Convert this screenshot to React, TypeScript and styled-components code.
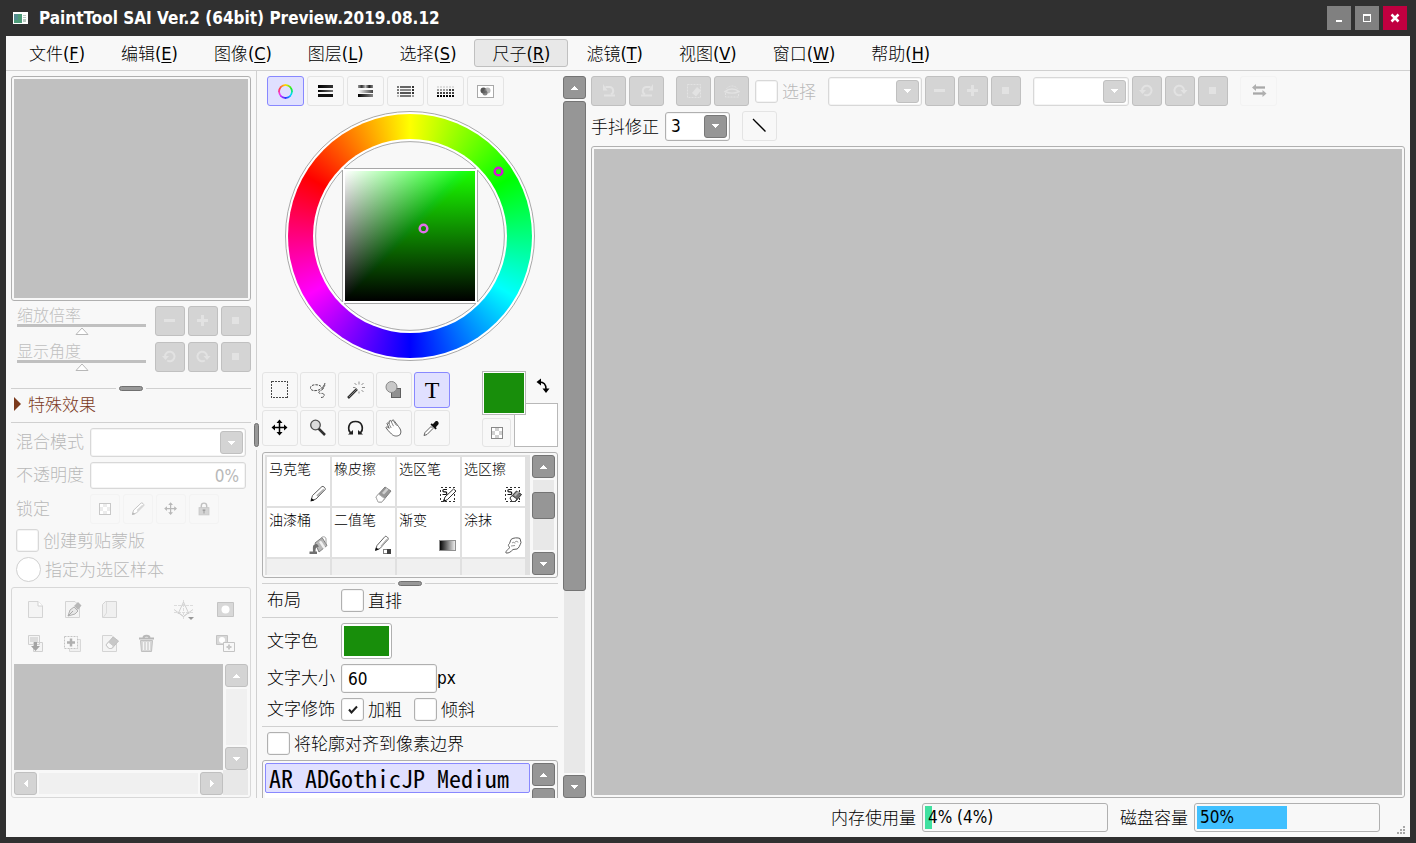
import React from "react";
import styled, { createGlobalStyle, css } from "styled-components";

const cjkFont = `"Noto Sans", "Noto Sans CJK SC", sans-serif`;
const latinFont = `"DejaVu Sans Condensed", "Noto Sans", sans-serif`;

const Global = createGlobalStyle`
  *, *::before, *::after { box-sizing: border-box; }
  body { margin: 0; background: #303030; }
  button, input, select { font: inherit; color: inherit; margin: 0; }
  button { padding: 0; }
  svg { display: block; }
`;

/* ---------- window frame ---------- */

const Frame = styled.div`
  display: flex;
  flex-direction: column;
  height: 100vh;
  padding: 0 6px 6px;
  background: #303030;
  color: #000;
  font: 300 17px/23px ${cjkFont};
`;

const TitleBar = styled.header`
  display: flex;
  align-items: center;
  flex: none;
  height: 36px;
  padding: 0 3px 0 7px;
`;

const Title = styled.h1`
  flex: 1;
  margin: 0 0 0 11px;
  color: #fff;
  font: 700 17px/24px ${latinFont};
`;

const WindowButton = styled.button<{ $close?: boolean }>`
  display: flex;
  align-items: center;
  justify-content: center;
  width: 24px;
  height: 24px;
  margin-left: 4px;
  border: 0;
  background: ${(p) => (p.$close ? "#c00040" : "#808080")};
`;

const Client = styled.main`
  display: flex;
  flex-direction: column;
  flex: 1;
  min-height: 0;
  background: #f8f8f8;
`;

const MenuBar = styled.nav`
  display: flex;
  align-items: center;
  flex: none;
  height: 35px;
  padding-left: 5px;
  border-bottom: 1px solid #d0d0d0;
`;

const Latin = styled.span`
  font-family: ${latinFont};
  font-weight: 400;
`;

const MenuItem = styled.button<{ $active?: boolean }>`
  height: 28px;
  padding: 0 17px;
  border: 1px solid ${(p) => (p.$active ? "#c0c0c0" : "transparent")};
  border-radius: 3px;
  background: ${(p) => (p.$active ? "#e8e8e8" : "transparent")};
  white-space: nowrap;
  ${Latin} {
    font-size: 18px;
  }
  u {
    text-underline-offset: 2px;
    text-decoration-thickness: 1px;
  }
`;

const Workspace = styled.div`
  display: grid;
  grid-template-columns: 240px 11px 296px 28px minmax(0, 1fr);
  flex: 1;
  min-height: 0;
  padding: 0 5px;
`;

const Column = styled.section`
  display: flex;
  flex-direction: column;
  min-width: 0;
  min-height: 0;
  padding-top: 5px;
  overflow: hidden;
`;

/* ---------- splitters ---------- */

const Splitter = styled.div<{ $vertical?: boolean }>`
  display: flex;
  flex: none;
  flex-direction: ${(p) => (p.$vertical ? "column" : "row")};
  align-items: center;
  gap: 3px;
  &::before,
  &::after {
    content: "";
    flex: 1;
    background: #d0d0d0;
    ${(p) => (p.$vertical ? "width: 1px;" : "height: 1px;")}
  }
`;

const Grip = styled.span<{ $vertical?: boolean }>`
  width: ${(p) => (p.$vertical ? 5 : 24)}px;
  height: ${(p) => (p.$vertical ? 24 : 5)}px;
  border: 1px solid #707070;
  border-radius: 3px;
  background: #989898;
`;

const Rule = styled.hr`
  flex: none;
  width: 100%;
  height: 1px;
  margin: 5px 0;
  border: 0;
  background: #d0d0d0;
`;

/* ---------- shared controls ---------- */

const Sunken = styled.div<{ $dim?: boolean }>`
  padding: 2px;
  border: 1px solid ${(p) => (p.$dim ? "#d8d8d8" : "#b0b0b0")};
  border-radius: 3px;
  background: #f8f8f8;
`;

const Blank = styled.div`
  width: 100%;
  height: 100%;
  background: #c0c0c0;
`;

const centered = css`
  display: flex;
  align-items: center;
  justify-content: center;
  flex: none;
`;

const SolidButton = styled.button<{ $wide?: boolean }>`
  ${centered}
  width: ${(p) => (p.$wide ? 35 : 30)}px;
  height: 30px;
  border: 1px solid #c0c0c0;
  border-radius: 3px;
  background: #d4d4d4;
  color: #e2e2e2;
`;

const FlatButton = styled.button<{ $w: number; $h: number; $active?: boolean; $ghost?: boolean }>`
  ${centered}
  width: ${(p) => p.$w}px;
  height: ${(p) => p.$h}px;
  border: 1px solid ${(p) => (p.$active ? "#8888ff" : p.$ghost ? "#f3f3f3" : "#e4e4e4")};
  border-radius: 3px;
  background: ${(p) => (p.$active ? "#e0e0ff" : "#f8f8f8")};
`;

const PlainButton = styled.button`
  ${centered}
  width: 37px;
  height: 34px;
  border: 0;
  background: transparent;
`;

const tick = `url("data:image/svg+xml,%3Csvg xmlns='http://www.w3.org/2000/svg' width='10' height='9'%3E%3Cpath d='M1 4.5L3.5 7.5L9 1.5' fill='none' stroke='%23202020' stroke-width='2'/%3E%3C/svg%3E")`;

const Check = styled.input.attrs({ type: "checkbox" })`
  appearance: none;
  flex: none;
  width: 23px;
  height: 23px;
  border: 1px solid #b0b0b0;
  border-radius: 3px;
  background: #fff center no-repeat;
  box-shadow: inset 0 0 0 1px #f4f4f4;
  &:checked {
    background-image: ${tick};
  }
  &:disabled {
    border-color: #d8d8d8;
  }
`;

const Radio = styled.input.attrs({ type: "radio" })`
  appearance: none;
  flex: none;
  width: 25px;
  height: 25px;
  border: 1px solid #d0d0d0;
  border-radius: 50%;
  background: #fff;
`;

const Option = styled.label<{ $dim?: boolean }>`
  display: flex;
  align-items: center;
  gap: 4px;
  white-space: nowrap;
  color: ${(p) => (p.$dim ? "#b8b8b8" : "#000")};
`;

const TextField = styled.input<{ $right?: boolean }>`
  min-width: 0;
  padding: 0 6px;
  border: 1px solid #b0b0b0;
  border-radius: 3px;
  background: #fff;
  box-shadow: inset 0 0 0 1px #f4f4f4;
  font-family: ${latinFont};
  font-weight: 400;
  text-align: ${(p) => (p.$right ? "right" : "left")};
  &:disabled {
    border-color: #d8d8d8;
    color: #b8b8b8;
  }
`;

const ComboBox = styled.span<{ $w: number; $dim?: boolean }>`
  display: flex;
  position: relative;
  flex: none;
  width: ${(p) => p.$w}px;
  height: 29px;
  border: 1px solid ${(p) => (p.$dim ? "#d8d8d8" : "#b0b0b0")};
  border-radius: 3px;
  background: #fff;
  box-shadow: inset 0 0 0 1px #f4f4f4;
`;

const ComboSelect = styled.select`
  appearance: none;
  width: 100%;
  padding: 0 28px 0 5px;
  border: 0;
  background: transparent;
  font-family: ${latinFont};
  font-weight: 400;
`;

const ComboArrow = styled.span<{ $dim?: boolean }>`
  ${centered}
  position: absolute;
  top: 2px;
  right: 2px;
  width: 23px;
  height: 23px;
  border: 1px solid ${(p) => (p.$dim ? "#c0c0c0" : "#787878")};
  border-radius: 3px;
  background: ${(p) => (p.$dim ? "#d4d4d4" : "#969696")};
  pointer-events: none;
`;

const Bar = styled.div<{ $row?: boolean }>`
  display: flex;
  flex-direction: ${(p) => (p.$row ? "row" : "column")};
  gap: 2px;
  flex: none;
  ${(p) => !p.$row && "width: 23px;"}
`;

const ScrollButton = styled.button<{ $dim?: boolean }>`
  ${centered}
  width: 23px;
  height: 23px;
  border: 1px solid ${(p) => (p.$dim ? "#c0c0c0" : "#747474")};
  border-radius: 3px;
  background: ${(p) => (p.$dim ? "#d4d4d4" : "#969696")};
`;

const Track = styled.div<{ $dim?: boolean; $row?: boolean }>`
  flex: 1;
  min-height: 0;
  margin: ${(p) => (p.$row ? "1px 0" : "0 1px")};
  background: ${(p) => (p.$dim ? "#f0f0f0" : "#e8e8e8")};
`;

const Thumb = styled.div<{ $h: number; $top?: number }>`
  height: ${(p) => p.$h}px;
  margin: ${(p) => p.$top ?? 0}px -1px 0;
  border: 1px solid #747474;
  border-radius: 3px;
  background: #969696;
`;

function Arrow({ dir, fill = "#fff" }: { dir: "up" | "down" | "left" | "right"; fill?: string }) {
  const shapes = {
    up: "M3 0h1v1h1v1h1v1h1v1H0V3h1V2h1V1h1z",
    down: "M0 0h7v1H6v1H5v1H4v1H3V3H2V2H1V1H0z",
    left: "M4 0v7H3V6H2V5H1V4H0V3h1V2h1V1h1V0z",
    right: "M0 0h1v1h1v1h1v1h1v1H3v1H2v1H1v1H0z",
  };
  const tall = dir === "left" || dir === "right";
  return (
    <svg width={tall ? 4 : 7} height={tall ? 7 : 4} fill={fill} shapeRendering="crispEdges" aria-hidden>
      <path d={shapes[dir]} />
    </svg>
  );
}

function Combo({ label, w, dim, value }: { label: string; w: number; dim?: boolean; value?: string }) {
  return (
    <ComboBox $w={w} $dim={dim}>
      <ComboSelect aria-label={label} disabled={dim}>
        <option>{value ?? ""}</option>
      </ComboSelect>
      <ComboArrow $dim={dim}>
        <Arrow dir="down" />
      </ComboArrow>
    </ComboBox>
  );
}

/* ---------- icons ---------- */

const Svg = (p: React.SVGProps<SVGSVGElement>) => <svg width={20} height={20} viewBox="0 0 20 20" fill="none" aria-hidden {...p} />;

const Minus = () => <Svg><path d="M4 8h11v3H4z" fill="currentColor" shapeRendering="crispEdges" /></Svg>;
const Plus = () => <Svg><path d="M4 8h4V4h3v4h4v3h-4v4H8v-4H4z" fill="currentColor" shapeRendering="crispEdges" /></Svg>;
const Dot = () => <Svg><path d="M6 6h7v7H6z" fill="currentColor" shapeRendering="crispEdges" /></Svg>;
const RotateCcw = () => (
  <Svg><path d="M5 9.500a4.800 4.800 0 1 1 2.200 4" stroke="currentColor" strokeWidth="2" /><path d="M2 9h7l-3.500 4z" fill="currentColor" /></Svg>
);
const RotateCw = () => (
  <Svg><path d="M14 9.500a4.800 4.800 0 1 0-2.200 4" stroke="currentColor" strokeWidth="2" /><path d="M10.500 9h7L14 13z" fill="currentColor" /></Svg>
);
const Undo = () => (
  <Svg><path d="M6.500 6h4.500a4 4 0 0 1 1 7.500" stroke="currentColor" strokeWidth="2" /><path d="M4 9.500V3l4.500 6.500zM5 13.500h11v2H5z" fill="currentColor" /></Svg>
);
const Redo = () => (
  <Svg><path d="M13.500 6H9a4 4 0 0 0-1 7.500" stroke="currentColor" strokeWidth="2" /><path d="M16 9.500V3l-4.500 6.500zM4 13.500h11v2H4z" fill="currentColor" /></Svg>
);
const Deselect = () => (
  <Svg><rect x="3.500" y="3.500" width="13" height="13" stroke="currentColor" strokeDasharray="2 1" /><path d="M8 12l5-6 4 3.500-5 6z" fill="currentColor" /></Svg>
);
const ShowSelection = () => (
  <Svg><path d="M4.500 8a6 5 0 0 1 11 0M3.500 12v4h13v-4" stroke="currentColor" strokeDasharray="2 1" /><path d="M3 10.500c4-3.500 10-3.500 14 0-4 2-10 2-14 0z" stroke="currentColor" strokeWidth="1.500" /></Svg>
);
const Flip = () => (
  <Svg>
    <path d="M5 5h11v3H5zM4 11h11v3H4z" fill="#c4c4c4" shapeRendering="crispEdges" />
    <path d="M5 6h11v1H5zM4 12h11v1H4z" fill="#a8a8a8" shapeRendering="crispEdges" />
    <path d="M3 6.500l4-3.500v7zM17.500 12.500l-4-3.500v7z" fill="#b0b0b0" />
  </Svg>
);

const Bars = () => (
  <Svg width="15" height="12" viewBox="0 0 15 12">
    <defs>
      <linearGradient id="dark"><stop stopColor="#000" /><stop offset="1" stopColor="#333" /></linearGradient>
      <linearGradient id="mid"><stop stopColor="#000" /><stop offset="1" stopColor="#777" /></linearGradient>
    </defs>
    <path d="M0 0h15v3H0z" fill="url(#dark)" /><path d="M0 5h15v2H0z" fill="url(#mid)" /><path d="M0 9h15v3H0z" fill="#111" />
  </Svg>
);
const HsvBars = () => (
  <Svg width="15" height="12" viewBox="0 0 15 12">
    <defs>
      <linearGradient id="hb1"><stop stopColor="#999" /><stop offset=".25" stopColor="#333" /><stop offset=".5" stopColor="#bbb" /><stop offset=".75" stopColor="#222" /><stop offset="1" stopColor="#888" /></linearGradient>
      <linearGradient id="hb2"><stop stopColor="#fff" /><stop offset="1" stopColor="#444" /></linearGradient>
      <linearGradient id="hb3"><stop stopColor="#000" /><stop offset="1" stopColor="#888" /></linearGradient>
    </defs>
    <path d="M0 0h15v3H0z" fill="url(#hb1)" /><path d="M0 5h15v3H0z" fill="url(#hb2)" /><path d="M0 9h15v3H0z" fill="url(#hb3)" />
  </Svg>
);
const MixBars = () => (
  <Svg width="17" height="11" viewBox="0 0 17 11" shapeRendering="crispEdges">
    {[0, 3, 6, 9].map((y, i) => (
      <React.Fragment key={y}>
        <path d={`M0 ${y}h2v2H0z`} fill={i === 3 ? "#bbb" : "#777"} />
        <path d={`M3 ${y}h11v2H3z`} fill={["#666", "#888", "#555", "#777"][i]} />
        <path d={`M15 ${y}h2v2h-2z`} fill={i === 3 ? "#999" : "#333"} />
      </React.Fragment>
    ))}
  </Svg>
);
const Swatches = () => (
  <Svg width="17" height="11" viewBox="0 0 17 11" shapeRendering="crispEdges">
    {[0, 1, 2, 3].map((r) =>
      [0, 1, 2, 3, 4, 5].map((c) => (
        <rect key={`${r}-${c}`} x={c * 3} y={r * 3} width="2" height="2" fill={["#ddd", c > 3 ? "#444" : "#999", "#444", "#000"][r]} />
      )),
    )}
  </Svg>
);
const Scratchpad = () => (
  <Svg width="17" height="13" viewBox="0 0 17 13">
    <rect x=".5" y=".5" width="16" height="12" fill="#fff" stroke="#a8a8a8" />
    <circle cx="6.500" cy="5.500" r="3" fill="#555" /><circle cx="10.500" cy="5.500" r="3" fill="#999" opacity=".7" /><circle cx="8" cy="8" r="2.500" fill="#666" opacity=".8" />
  </Svg>
);

const HueDot = styled.span`
  width: 15px;
  height: 15px;
  border-radius: 50%;
  background: conic-gradient(from -60deg, #f44, #fd0, #2e2, #0df, #33f, #e3f, #f44);
  mask: radial-gradient(circle, transparent 5px, #000 6px);
`;

const Marquee = () => <Svg><rect x="1.500" y="1.500" width="16" height="16" stroke="#484848" strokeDasharray="2 1" shapeRendering="crispEdges" /></Svg>;
const Lasso = () => (
  <Svg>
    <path d="M13 6.500C11 4 3 4 2.500 7.500S8 11.500 12 9.500l5-5" stroke="#484848" strokeDasharray="2.500 1" />
    <path d="M17 3l-2 6c-3 2-5 3-4 4s4-.5 5 1.500-1 3-3 3" stroke="#505050" strokeDasharray="4 1" />
    <path d="M14 9l3-4.500" stroke="#808080" strokeWidth="1.500" />
  </Svg>
);
const Wand = () => (
  <Svg>
    <path d="M2 18L11 9" stroke="#303030" strokeWidth="2.500" /><path d="M3 17L11 9" stroke="#909090" strokeWidth=".8" />
    <path d="M13 4.500v-3M13 13.500v-2M16 7.500h3M9.500 7.500H7M15.500 5l2-2M10.500 5l-2-2M15.500 10l2 2" stroke="#909090" />
  </Svg>
);
const Shapes = () => (
  <Svg><rect x="7.500" y="8.500" width="9" height="9" fill="#909090" stroke="#606060" /><circle cx="7.500" cy="7" r="5.500" fill="#c8c8c8" stroke="#888" /></Svg>
);
const TextGlyph = styled.span`
  color: #000;
  font: 400 24px/34px "Liberation Serif", serif;
`;
const Move = ({ c = "#000", s = 20 }: { c?: string; s?: number }) => (
  <Svg width={s} height={s}>
    <path d="M9.500 3v13M3 9.500h13" stroke={c} strokeWidth="1.500" />
    <path d="M9.500 1.500L12.500 5h-6zM9.500 17.500l3-3.500h-6zM1.500 9.500L5 6.500v6zM17.500 9.500L14 6.500v6z" fill={c} />
  </Svg>
);
const Magnifier = () => (
  <Svg><path d="M10.500 10.500l6.500 6.500" stroke="#303030" strokeWidth="2.500" /><circle cx="7.500" cy="7" r="4.800" fill="#dcdcdc" stroke="#505050" strokeWidth="1.300" /></Svg>
);
const Omega = () => (
  <Svg>
    <path d="M5.500 15.500C.8 12 2 3.500 9.500 3.500s8.700 8.500 4 12" stroke="#202020" strokeWidth="1.700" />
    <path d="M2 16.500h5v-4.500zM17 16.500h-5v-4.500z" fill="#202020" />
  </Svg>
);
const Hand = () => (
  <Svg>
    <path d="M7.500 16C5 13.500 3 11.500 2 9.500c.3-1 1.500-1 3.200.8L3 5.500c.5-1.200 1.700-.8 2 .3L5.300 3c.8-1 2-.5 2.200.7L8.500 2C9.500 1.500 10.500 3 11 4l3.500 4.500c2.800 3.500 3 6 1.200 8.500-2.500 1.500-5.800 1.500-8.200-1z" fill="#fff" stroke="#606060" />
    <path d="M4.500 5l2.700 5M7 3.200l2.500 5M9.500 3l3 4.500" stroke="#888" />
  </Svg>
);
const Dropper = () => (
  <Svg>
    <path d="M2 17.500l1-3 6-6 2 2-6 6z" fill="#fff" stroke="#606060" />
    <path d="M8.500 6.500l5 5 1.300-1.300-1-1 2.500-2.700c1.500-2-1.300-4.500-3-3l-2.500 2.700-1-1z" fill="#101010" />
  </Svg>
);
const Checker = ({ dim }: { dim?: boolean }) => (
  <Svg width="12" height="12" viewBox="0 0 12 12" shapeRendering="crispEdges">
    <rect x="0" y="0" width="12" height="12" fill={dim ? "#c8c8c8" : "#888"} />
    <rect x="1" y="1" width="10" height="10" fill="#fff" />
    <path d="M1 4h3v4H1zM4 1h4v3H4zM8 4h3v4H8zM4 8h4v3H4z" fill={dim ? "#ececec" : "#d0d0d0"} />
  </Svg>
);
const Swap = () => (
  <Svg><path d="M7.500 5c4 0 6.500 2.500 6.500 7" stroke="#000" strokeWidth="1.500" /><path d="M4.500 5L9 1.500v7zM10.500 11.500h7L14 16z" fill="#000" /></Svg>
);
const Pencil = ({ dim }: { dim?: boolean }) => (
  <Svg width={dim ? 16 : 20} height={dim ? 16 : 20}>
    <path d="M3 16.500l1.500-5L14 2.500c1-.8 4 1.500 3.200 3.200L8 15z" fill="#fff" stroke={dim ? "#b8b8b8" : "#606060"} />
    <path d="M9 12l7-6.500" stroke={dim ? "#d8d8d8" : "#b0b0b0"} strokeWidth="2" /><path d="M2.500 17.500l1-3.500 3 2.500z" fill={dim ? "#b8b8b8" : "#101010"} />
  </Svg>
);
const Eraser = () => (
  <Svg>
    <path d="M3 13L12 3l6 4-9 11H5.500z" fill="#989898" stroke="#808080" /><path d="M3 13l2.500-3 6 4.500-2.500 3.500H5z" fill="#fff" stroke="#b0b0b0" />
    <path d="M9 9l4.500-5 2 1.500-4.500 5z" fill="#d0d0d0" />
  </Svg>
);
const DashBox = () => (
  <>
    <rect x="2.500" y="3.500" width="14" height="14" stroke="#303030" strokeDasharray="2 2" shapeRendering="crispEdges" />
    <path d="M9 5.500H6c-1.500 0-1.500 2.300 0 2.300h1.500c1.700 0 1.700 2.700 0 2.700H4.500" stroke="#101010" strokeWidth="1.200" />
  </>
);
const SelPen = () => (
  <Svg><DashBox /><path d="M5.500 17.500l1.500-4.500L15.500 5l2.500 2-8.500 8.500z" fill="#fff" stroke="#303030" /><path d="M5 18l1-3 2 1.500z" fill="#101010" /></Svg>
);
const SelEraser = () => (
  <Svg><DashBox /><path d="M7 14l6.500-7 5 3.500-6 7H9.500z" fill="#707070" stroke="#303030" /><path d="M11 11l4-4 1.500 1-4 4.500z" fill="#b0b0b0" /><path d="M7 14l2-2.500 5 3.500-2 2.500H9z" fill="#fff" stroke="#404040" /></Svg>
);
const Bucket = () => (
  <Svg>
    <path d="M7 8l7-5.500 5 8-8 6.500z" fill="#b8b8b8" stroke="#808080" /><path d="M13 7V4c0-3 5-3 5 0v5" stroke="#a0a0a0" />
    <path d="M11 7l2-1.500 4.500 7-2 1.500z" fill="#f0f0f0" /><path d="M9 9C4 9 5 12 5 16.500H1.500V19H9v-2.500H7.500c0-4 1-4.500 3.500-5z" fill="#707070" />
  </Svg>
);
const BinaryPen = () => (
  <Svg><path d="M2.500 15l1.500-4.500L12 1.500c1-.8 4 1.200 3 3L7 13.500z" fill="#fff" stroke="#606060" /><path d="M8 11.500l6-7" stroke="#b0b0b0" strokeWidth="1.500" /><path d="M2 16l1-3.500 3 2z" fill="#101010" /><rect x="10.500" y="14.500" width="7" height="4" fill="#fff" stroke="#808080" /><path d="M14 14h4v5h-4z" fill="#404040" /></Svg>
);
const Gradient = () => (
  <Svg>
    <defs><linearGradient id="fade"><stop stopColor="#000" /><stop offset="1" stopColor="#f4f4f4" /></linearGradient></defs>
    <rect x="1.500" y="5.500" width="16" height="10" fill="url(#fade)" stroke="#909090" />
  </Svg>
);
const Smudge = () => (
  <Svg><path d="M3 18c-1-1 2-4 4-5.500-2-1-2-3-.5-4L8 4.500c2-2 7-2 9-1l1 4c-1 3-2.500 6-4 6.500l-4 .5c-2 2-4 4-7 3.500z" fill="#fff" stroke="#606060" /><path d="M9 8c1-1 3-1 3 .5M12 7c1-1 3-1 3 .5M8 11l4-.5" stroke="#989898" /></Svg>
);
const Lock = () => (
  <Svg width="18" height="18"><path d="M7 9V6.500a3 3 0 0 1 6 0V9" stroke="#c0c0c0" strokeWidth="1.600" /><rect x="4.500" y="8.500" width="11" height="8" fill="#d4d4d4" stroke="#c8c8c8" /><path d="M8.500 10.500h3V12h-1v3h-1v-3h-1z" fill="#989898" /></Svg>
);

const Page = ({ x = 0 }: { x?: number }) => (
  <path d={`M${2.5 + x} 1.500h9.500l4.500 4.500v11.500H${2.5 + x}z`} fill="#f4f4f4" stroke="#d4d4d4" />
);
const NewLayer = () => <Svg><Page /><path d="M12 1.500v4.500h4.500" fill="#fff" stroke="#d0d0d0" /></Svg>;
const NewLinework = () => <Svg><Page /><path d="M5 16l2-6 4-3 4 4-3 3z" fill="#e8e8e8" stroke="#b0b0b0" /><path d="M5 16l5-5" stroke="#a8a8a8" /><path d="M11 6l4-4 3.500 3.500L15 10z" fill="#b8b8b8" /></Svg>;
const NewFolder = () => <Svg><path d="M2.500 17.500v-13l3-3h11v16z" fill="#f0f0f0" stroke="#d4d4d4" /><path d="M6.500 2v11l-3 4" stroke="#dcdcdc" /></Svg>;
const Perspective = () => (
  <Svg width="22" height="22" viewBox="0 0 22 22">
    <path d="M10.500 1v19M1 6.500h19M1 13.500h19" stroke="#dcdcdc" strokeDasharray="3 1" />
    <path d="M10.500 3L16 15M10.500 3L5 15M1 10.500l9.500 7 9.500-7M5 13.500l5.500 4 5.500-4" stroke="#d0d0d0" />
    <path d="M15 18h6l-3 3z" fill="#989898" />
  </Svg>
);
const Mask = () => <Svg><path d="M1.500 2.500h16v14h-16z" fill="#d8d8d8" stroke="#c4c4c4" /><circle cx="9.500" cy="9.500" r="4" fill="#fff" /></Svg>;
const MergeDown = () => <Svg><path d="M7.500 8.500h9v9h-9zM2.500 1.500h11v9h-11z" fill="#f4f4f4" stroke="#d0d0d0" /><path d="M4 3h8v5H4z" fill="#dcdcdc" /><path d="M8 8h3v4h3l-4.500 5L5 12h3z" fill="#a4a4a4" /></Svg>;
const CopyLayer = () => <Svg><path d="M6.500 5.500h11v12h-11z" fill="#f0f0f0" stroke="#d8d8d8" /><rect x="1.500" y="2.500" width="13" height="12" fill="#f8f8f8" stroke="#c4c4c4" strokeDasharray="2 1" /><path d="M8 4.500v8M4 8.500h8" stroke="#b0b0b0" strokeWidth="2.500" /></Svg>;
const ClearLayer = () => <Svg><Page /><path d="M6 11l7-8 5.500 4-6.500 7.500H9z" fill="#c8c8c8" stroke="#c0c0c0" /><path d="M6 11l2.500-3 5 4-2 2.500H9z" fill="#f8f8f8" stroke="#c8c8c8" /></Svg>;
const Trash = () => <Svg><path d="M2 4.500h15M6.500 4c0-3 6-3 6 0" stroke="#b8b8b8" strokeWidth="2" /><path d="M3.500 6.500h12l-1 11h-10z" fill="#d8d8d8" stroke="#c0c0c0" /><path d="M6.500 8v8M9.500 8v8M12.500 8v8" stroke="#f4f4f4" /></Svg>;
const ApplyMask = () => <Svg><path d="M.5 1.500h11v9H.5z" fill="#d8d8d8" stroke="#c4c4c4" /><circle cx="6" cy="6" r="3" fill="#fff" /><path d="M7.500 8.500h11v9h-11z" fill="#f8f8f8" stroke="#c4c4c4" /><path d="M13 10.500v5M10.500 13h5" stroke="#c8c8c8" strokeWidth="2" /></Svg>;

/* ---------- left column ---------- */

const Navigator = styled(Sunken)`
  flex: none;
  height: 225px;
`;

const SliderRow = styled.div`
  display: flex;
  gap: 3px;
  flex: none;
  height: 30px;
  margin-top: 5px;
  & + & {
    margin-top: 6px;
  }
`;

const SliderField = styled.label`
  display: flex;
  flex-direction: column;
  flex: 1;
  padding: 0 6px;
  color: #c0c0c0;
  font-size: 16px;
  line-height: 18px;
`;

const triangle = `url("data:image/svg+xml,%3Csvg xmlns='http://www.w3.org/2000/svg' width='14' height='8'%3E%3Cpath d='M1 7.500L7 1L13 7.500z' fill='%23fff' stroke='%23b8b8b8'/%3E%3C/svg%3E")`;

const Slider = styled.input.attrs({ type: "range" })`
  appearance: none;
  width: 100%;
  height: 12px;
  background: linear-gradient(#c0c0c0, #c0c0c0) 0 0 / 100% 3px no-repeat;
  &::-webkit-slider-runnable-track {
    height: 12px;
  }
  &::-webkit-slider-thumb {
    appearance: none;
    width: 14px;
    height: 8px;
    margin-top: 3px;
    background: ${triangle};
  }
`;

const NavSplitter = styled(Splitter)`
  margin-top: 14px;
`;

const EffectsToggle = styled.button`
  display: flex;
  align-items: center;
  gap: 7px;
  flex: none;
  height: 26px;
  padding: 0 3px;
  border: 0;
  background: transparent;
  color: #7b3a1c;
`;

const Rows = styled.div`
  display: flex;
  flex-direction: column;
  gap: 5px;
  flex: none;
`;

const Field = styled.div<{ $dim?: boolean }>`
  display: flex;
  align-items: center;
  padding-left: 5px;
  color: ${(p) => (p.$dim ? "#b8b8b8" : "#000")};
`;

const FieldLabel = styled.label`
  flex: none;
  width: 74px;
  padding-bottom: 2px;
  line-height: 21px;
  white-space: nowrap;
`;

const OpacityField = styled(TextField)`
  width: 156px;
  height: 27px;
`;

const LockButtons = styled.div`
  display: flex;
  gap: 3px;
`;

const Layers = styled(Sunken)`
  display: flex;
  flex-direction: column;
  flex: 1;
  min-height: 0;
  margin-top: 5px;
`;

const LayerTools = styled.div`
  display: grid;
  grid-template-columns: repeat(4, 37px) 42px 1fr;
  flex: none;
  padding: 3px;
`;

const LayerArea = styled.div`
  display: grid;
  grid-template: 1fr 25px / 1fr 25px;
  flex: 1;
  min-height: 0;
  & > :nth-child(2) {
    margin-left: 2px;
  }
  & > :nth-child(3) {
    margin-top: 2px;
  }
`;

const Corner = styled.div`
  background: #e8e8e8;
`;

function SliderControl({ label, children }: { label: string; children: React.ReactNode }) {
  return (
    <SliderRow>
      <SliderField>
        {label}
        <Slider defaultValue={50} disabled />
      </SliderField>
      {children}
    </SliderRow>
  );
}

function LeftPanel() {
  return (
    <Column>
      <Navigator><Blank /></Navigator>
      <SliderControl label="缩放倍率">
        <SolidButton disabled aria-label="缩小"><Minus /></SolidButton>
        <SolidButton disabled aria-label="放大"><Plus /></SolidButton>
        <SolidButton disabled aria-label="还原"><Dot /></SolidButton>
      </SliderControl>
      <SliderControl label="显示角度">
        <SolidButton disabled aria-label="左转"><RotateCcw /></SolidButton>
        <SolidButton disabled aria-label="右转"><RotateCw /></SolidButton>
        <SolidButton disabled aria-label="还原"><Dot /></SolidButton>
      </SliderControl>
      <NavSplitter><Grip /></NavSplitter>
      <EffectsToggle>
        <svg width="7" height="14" fill="#7b3a1c" aria-hidden><path d="M0 0l7 7-7 7z" /></svg>
        特殊效果
      </EffectsToggle>
      <Rule />
      <Rows>
        <Field $dim>
          <FieldLabel as="span">混合模式</FieldLabel>
          <Combo label="混合模式" w={156} dim />
        </Field>
        <Field $dim>
          <FieldLabel htmlFor="opacity">不透明度</FieldLabel>
          <OpacityField id="opacity" disabled defaultValue="0%" $right />
        </Field>
        <Field $dim>
          <FieldLabel as="span">锁定</FieldLabel>
          <LockButtons>
            <FlatButton $w={30} $h={30} $ghost disabled aria-label="锁定不透明度"><Checker dim /></FlatButton>
            <FlatButton $w={30} $h={30} $ghost disabled aria-label="锁定绘画"><Pencil dim /></FlatButton>
            <FlatButton $w={30} $h={30} $ghost disabled aria-label="锁定移动"><Move c="#b8b8b8" s={16} /></FlatButton>
            <FlatButton $w={30} $h={30} $ghost disabled aria-label="锁定全部"><Lock /></FlatButton>
          </LockButtons>
        </Field>
        <Field $dim>
          <Option $dim><Check disabled />创建剪贴蒙版</Option>
        </Field>
        <Field $dim>
          <Option $dim><Radio disabled />指定为选区样本</Option>
        </Field>
      </Rows>
      <Layers $dim>
        <LayerTools>
          <PlainButton disabled aria-label="新建图层"><NewLayer /></PlainButton>
          <PlainButton disabled aria-label="新建钢笔图层"><NewLinework /></PlainButton>
          <PlainButton disabled aria-label="新建图层组"><NewFolder /></PlainButton>
          <span />
          <PlainButton disabled aria-label="透视尺"><Perspective /></PlainButton>
          <PlainButton disabled aria-label="图层蒙版"><Mask /></PlainButton>
          <PlainButton disabled aria-label="向下合并"><MergeDown /></PlainButton>
          <PlainButton disabled aria-label="复制图层"><CopyLayer /></PlainButton>
          <PlainButton disabled aria-label="清除图层"><ClearLayer /></PlainButton>
          <PlainButton disabled aria-label="删除图层"><Trash /></PlainButton>
          <span />
          <PlainButton disabled aria-label="应用蒙版"><ApplyMask /></PlainButton>
        </LayerTools>
        <LayerArea>
          <Blank />
          <Bar>
            <ScrollButton $dim disabled aria-label="上"><Arrow dir="up" /></ScrollButton>
            <Track $dim />
            <ScrollButton $dim disabled aria-label="下"><Arrow dir="down" /></ScrollButton>
          </Bar>
          <Bar $row>
            <ScrollButton $dim disabled aria-label="左"><Arrow dir="left" /></ScrollButton>
            <Track $dim $row />
            <ScrollButton $dim disabled aria-label="右"><Arrow dir="right" /></ScrollButton>
          </Bar>
          <Corner />
        </LayerArea>
      </Layers>
    </Column>
  );
}

/* ---------- colour and tool column ---------- */

const Tabs = styled.div`
  display: flex;
  gap: 3px;
  flex: none;
  padding-left: 5px;
`;

const Wheel = styled.div`
  position: relative;
  flex: none;
  align-self: center;
  width: 250px;
  height: 250px;
  margin: 5px 0 10px;
  border: 1px solid #a8a8a8;
  border-radius: 50%;
  background: #fff;
`;

const HueRing = styled.div`
  position: absolute;
  inset: 2px;
  border-radius: 50%;
  background: conic-gradient(from -60deg, #f00, #ff0, #0f0, #0ff, #00f, #f0f, #f00);
`;

const WheelArt = styled.svg`
  position: absolute;
  inset: -1px;
`;

const ShadeSquare = styled.div`
  position: absolute;
  top: 59px;
  left: 59px;
  width: 130px;
  height: 130px;
  background:
    linear-gradient(135deg, #fff, #000 50%),
    linear-gradient(#1aff00, #000);
  background-blend-mode: lighten;
`;

const ToolArea = styled.div`
  display: flex;
  justify-content: space-between;
  flex: none;
  height: 76px;
`;

const ToolGrid = styled.div`
  display: grid;
  grid-template: repeat(2, 36px) / repeat(5, 36px);
  gap: 2px;
  padding-top: 1px;
`;

const ColorPair = styled.div`
  display: grid;
  grid-template: 32px 12px 32px / 32px 12px 32px;
`;

const ColorChip = styled.button<{ $color: string; $back?: boolean }>`
  grid-area: ${(p) => (p.$back ? "2 / 2 / 4 / 4" : "1 / 1 / 3 / 3")};
  z-index: ${(p) => (p.$back ? 0 : 1)};
  border: 1px solid #b8b8b8;
  background: ${(p) => p.$color};
  box-shadow: inset 0 0 0 1px #fff;
`;

const ClearChip = styled.div`
  grid-area: 3 / 1;
  align-self: end;
`;

const SwapChip = styled.button`
  ${centered}
  grid-area: 1 / 3;
  border: 0;
  background: transparent;
`;

const Brushes = styled(Sunken)`
  display: flex;
  gap: 2px;
  flex: none;
  height: 126px;
  margin-top: 5px;
  overflow: hidden;
`;

const BrushGrid = styled.div`
  display: grid;
  grid-template: repeat(3, 49px) / repeat(4, 63px);
  gap: 2px;
  flex: 1;
  height: 120px;
  padding: 2px;
  overflow: hidden;
  background: #e0e0e0;
`;

const Brush = styled.button<{ $empty?: boolean }>`
  display: flex;
  flex-direction: column;
  justify-content: space-between;
  padding: 2px;
  border: 0;
  background: ${(p) => (p.$empty ? "#f0f0f0" : "#fff")};
  font-size: 14px;
  line-height: 20px;
  text-align: left;
  svg {
    align-self: flex-end;
  }
`;

const FormSplitter = styled(Splitter)`
  margin: 3px 0;
`;

const Swatch = styled.input.attrs({ type: "color" })`
  width: 51px;
  height: 36px;
  padding: 2px;
  border: 1px solid #b0b0b0;
  border-radius: 3px;
  background: #fff;
  &::-webkit-color-swatch-wrapper {
    padding: 0;
  }
  &::-webkit-color-swatch {
    border: 0;
    border-radius: 0;
  }
`;

const SizeField = styled(TextField)`
  width: 96px;
  height: 29px;
`;

const StyleOptions = styled.div`
  display: flex;
  gap: 12px;
`;

const FontList = styled(Sunken)`
  display: flex;
  gap: 2px;
  flex: none;
  height: 120px;
  margin-top: 5px;
`;

const FontItems = styled.div`
  flex: 1;
  min-width: 0;
  background: #fff;
`;

const FontItem = styled.button`
  display: block;
  width: 100%;
  height: 30px;
  padding: 0 3px;
  border: 1px solid #8888ff;
  border-radius: 2px;
  background: #e0e0ff;
  font: 300 24px/28px "Noto Sans Mono CJK JP", "Liberation Mono", monospace;
  text-align: left;
  white-space: nowrap;
`;

const brushes: [string, React.ReactNode][] = [
  ["马克笔", <Pencil />],
  ["橡皮擦", <Eraser />],
  ["选区笔", <SelPen />],
  ["选区擦", <SelEraser />],
  ["油漆桶", <Bucket />],
  ["二值笔", <BinaryPen />],
  ["渐变", <Gradient />],
  ["涂抹", <Smudge />],
];

const tools: [string, React.ReactNode][] = [
  ["选择", <Marquee />],
  ["套索", <Lasso />],
  ["魔棒", <Wand />],
  ["形状", <Shapes />],
  ["文字", <TextGlyph>T</TextGlyph>],
  ["移动", <Move />],
  ["缩放", <Magnifier />],
  ["旋转", <Omega />],
  ["抓手", <Hand />],
  ["吸管", <Dropper />],
];

const colorTabs: [string, React.ReactNode][] = [
  ["色轮", <HueDot />],
  ["RGB 滑块", <Bars />],
  ["HSV 滑块", <HsvBars />],
  ["中间色", <MixBars />],
  ["自定义色板", <Swatches />],
  ["便笺本", <Scratchpad />],
];

function ColorWheel() {
  return (
    <Wheel>
      <HueRing />
      <WheelArt width="250" height="250" aria-hidden>
        <circle cx="125" cy="125" r="97" fill="#fff" />
        <g fill="#f8f8f8" stroke="#a8a8a8">
          <path d="M59 57.500A94.500 94.500 0 0 1 191 57.500z" />
          <path d="M59 192.500A94.500 94.500 0 0 0 191 192.500z" />
          <path d="M57.500 59A94.500 94.500 0 0 0 57.500 191z" />
          <path d="M192.500 59A94.500 94.500 0 0 1 192.500 191z" />
        </g>
      </WheelArt>
      <ShadeSquare />
      <WheelArt width="250" height="250" aria-hidden>
        <circle cx="213.500" cy="60.500" r="3.800" fill="none" stroke="#d810d8" strokeWidth="2.500" />
        <circle cx="138.500" cy="117.500" r="3.800" fill="none" stroke="#e070e8" strokeWidth="2.500" />
      </WheelArt>
    </Wheel>
  );
}

function ToolPanel() {
  return (
    <Column>
      <Tabs>
        {colorTabs.map(([name, icon], i) => (
          <FlatButton key={name} $w={37} $h={30} $active={i === 0} aria-label={name}>{icon}</FlatButton>
        ))}
      </Tabs>
      <ColorWheel />
      <ToolArea>
        <ToolGrid>
          {tools.map(([name, icon], i) => (
            <FlatButton key={name} $w={36} $h={36} $active={i === 4} aria-label={name}>{icon}</FlatButton>
          ))}
        </ToolGrid>
        <ColorPair>
          <ColorChip $color="#188e0b" aria-label="前景色" />
          <ColorChip $color="#ffffff" $back aria-label="背景色" />
          <ClearChip>
            <FlatButton $w={29} $h={29} aria-label="透明色"><Checker /></FlatButton>
          </ClearChip>
          <SwapChip aria-label="交换颜色"><Swap /></SwapChip>
        </ColorPair>
      </ToolArea>
      <Brushes>
        <BrushGrid>
          {brushes.map(([name, icon]) => (
            <Brush key={name}>{name}{icon}</Brush>
          ))}
          {[0, 1, 2, 3].map((n) => <Brush key={n} $empty aria-label="空" />)}
        </BrushGrid>
        <Bar>
          <ScrollButton aria-label="上"><Arrow dir="up" /></ScrollButton>
          <Track><Thumb $h={27} $top={12} /></Track>
          <ScrollButton aria-label="下"><Arrow dir="down" /></ScrollButton>
        </Bar>
      </Brushes>
      <FormSplitter><Grip /></FormSplitter>
      <Field>
        <FieldLabel as="span">布局</FieldLabel>
        <Option><Check />直排</Option>
      </Field>
      <Rule />
      <Rows>
        <Field>
          <FieldLabel htmlFor="text-color">文字色</FieldLabel>
          <Swatch id="text-color" defaultValue="#188e0b" />
        </Field>
        <Field>
          <FieldLabel htmlFor="text-size">文字大小</FieldLabel>
          <SizeField id="text-size" defaultValue="60" />
          <Latin>px</Latin>
        </Field>
        <Field>
          <FieldLabel as="span">文字修饰</FieldLabel>
          <StyleOptions>
            <Option><Check defaultChecked />加粗</Option>
            <Option><Check />倾斜</Option>
          </StyleOptions>
        </Field>
      </Rows>
      <Rule />
      <Field>
        <Option><Check />将轮廓对齐到像素边界</Option>
      </Field>
      <FontList>
        <FontItems>
          <FontItem>AR ADGothicJP Medium</FontItem>
        </FontItems>
        <Bar>
          <ScrollButton aria-label="上"><Arrow dir="up" /></ScrollButton>
          <Track><Thumb $h={60} /></Track>
        </Bar>
      </FontList>
    </Column>
  );
}

const PanelScroll = styled(Bar)`
  padding-top: 5px;
  margin-left: 5px;
  min-height: 0;
`;

/* ---------- canvas column ---------- */

const CanvasColumn = styled(Column)`
  gap: 5px;
  margin-left: 5px;
`;

const Toolbar = styled.div`
  display: flex;
  align-items: center;
  gap: 12px;
  flex: none;
  height: 30px;
`;

const Group = styled.div`
  display: flex;
  align-items: center;
  gap: 3px;
`;

const SelectGroup = styled(Group)`
  gap: 6px;
`;

const CanvasBox = styled(Sunken)`
  flex: 1;
  min-height: 0;
`;

function CanvasArea() {
  return (
    <CanvasColumn>
      <Toolbar>
        <Group>
          <SolidButton $wide disabled aria-label="撤销"><Undo /></SolidButton>
          <SolidButton $wide disabled aria-label="重做"><Redo /></SolidButton>
        </Group>
        <SelectGroup>
          <Group>
            <SolidButton $wide disabled aria-label="取消选择"><Deselect /></SolidButton>
            <SolidButton $wide disabled aria-label="反选"><ShowSelection /></SolidButton>
          </Group>
          <Option $dim><Check disabled />选择</Option>
        </SelectGroup>
        <Group>
          <Combo label="缩放" w={94} dim />
          <SolidButton disabled aria-label="缩小"><Minus /></SolidButton>
          <SolidButton disabled aria-label="放大"><Plus /></SolidButton>
          <SolidButton disabled aria-label="还原"><Dot /></SolidButton>
        </Group>
        <Group>
          <Combo label="角度" w={96} dim />
          <SolidButton disabled aria-label="左转"><RotateCcw /></SolidButton>
          <SolidButton disabled aria-label="右转"><RotateCw /></SolidButton>
          <SolidButton disabled aria-label="还原"><Dot /></SolidButton>
        </Group>
        <FlatButton $w={37} $h={30} $ghost disabled aria-label="翻转"><Flip /></FlatButton>
      </Toolbar>
      <Toolbar>
        <SelectGroup>
          手抖修正
          <Combo label="手抖修正" w={65} value="3" />
        </SelectGroup>
        <FlatButton $w={35} $h={30} aria-label="直线">
          <Svg><path d="M3 3l12.500 12.500" stroke="#000" strokeWidth="1.300" /></Svg>
        </FlatButton>
      </Toolbar>
      <CanvasBox><Blank /></CanvasBox>
    </CanvasColumn>
  );
}

/* ---------- status bar ---------- */

const StatusBar = styled.footer`
  display: flex;
  align-items: center;
  justify-content: flex-end;
  gap: 12px;
  flex: none;
  height: 39px;
  padding-right: 4px;
`;

const Gauge = styled.div`
  display: flex;
  align-items: center;
  gap: 6px;
`;

const GaugeBox = styled(Sunken)<{ $fill: string }>`
  width: 186px;
  height: 29px;
  background: linear-gradient(${(p) => p.$fill}, ${(p) => p.$fill}) no-repeat content-box #f8f8f8;
  font-family: ${latinFont};
  font-weight: 400;
  text-indent: 3px;
`;

const SizeGrip = () => (
  <svg width="14" height="36" fill="#a8a8a8" shapeRendering="crispEdges" aria-hidden>
    <path d="M11 26h2v2h-2zM8 29h2v2H8zM11 32h2v2h-2zM5 32h2v2H5zM8 32h2v2H8zM11 29h2v2h-2z" />
  </svg>
);

const menus: [string, string][] = [
  ["文件", "F"], ["编辑", "E"], ["图像", "C"], ["图层", "L"], ["选择", "S"],
  ["尺子", "R"], ["滤镜", "T"], ["视图", "V"], ["窗口", "W"], ["帮助", "H"],
];

export default function App() {
  return (
    <>
      <Global />
      <Frame>
        <TitleBar>
          <svg width="15" height="12" viewBox="0 0 15 12" aria-hidden>
            <path d="M0 0h15v12H0z" fill="#fff" />
            <path d="M1 2h8v9H1z" fill="#4c9a78" /><path d="M1 2h4v6H1z" fill="#5a80a8" opacity=".5" />
            <path d="M10 3h3v1h-3zM10 5h3v1h-3zM10 7h3v3h-3z" fill="#b8c8c0" />
          </svg>
          <Title>PaintTool SAI Ver.2 (64bit) Preview.2019.08.12</Title>
          <WindowButton aria-label="最小化"><svg width="12" height="12" fill="#fff" aria-hidden><path d="M3 8h6v2H3z" /></svg></WindowButton>
          <WindowButton aria-label="最大化"><svg width="12" height="12" fill="#fff" fillRule="evenodd" aria-hidden><path d="M2 2h8v8H2zM3 4v5h6V4z" /></svg></WindowButton>
          <WindowButton $close aria-label="关闭"><svg width="12" height="12" aria-hidden><path d="M2.500 2.500l7 7M9.500 2.500l-7 7" stroke="#fff" strokeWidth="2.500" /></svg></WindowButton>
        </TitleBar>
        <Client>
          <MenuBar>
            {menus.map(([name, key]) => (
              <MenuItem key={key} $active={key === "R"}>{name}<Latin>(<u>{key}</u>)</Latin></MenuItem>
            ))}
          </MenuBar>
          <Workspace>
            <LeftPanel />
            <Splitter $vertical><Grip $vertical /></Splitter>
            <ToolPanel />
            <PanelScroll>
              <ScrollButton aria-label="上"><Arrow dir="up" /></ScrollButton>
              <Track><Thumb $h={490} /></Track>
              <ScrollButton aria-label="下"><Arrow dir="down" /></ScrollButton>
            </PanelScroll>
            <CanvasArea />
          </Workspace>
          <StatusBar>
            <Gauge>内存使用量<GaugeBox $fill="#40e0a0" style={{ backgroundSize: "4% 100%" }}>4% (4%)</GaugeBox></Gauge>
            <Gauge>磁盘容量<GaugeBox $fill="#40c0ff" style={{ backgroundSize: "50% 100%" }}>50%</GaugeBox></Gauge>
            <SizeGrip />
          </StatusBar>
        </Client>
      </Frame>
    </>
  );
}
